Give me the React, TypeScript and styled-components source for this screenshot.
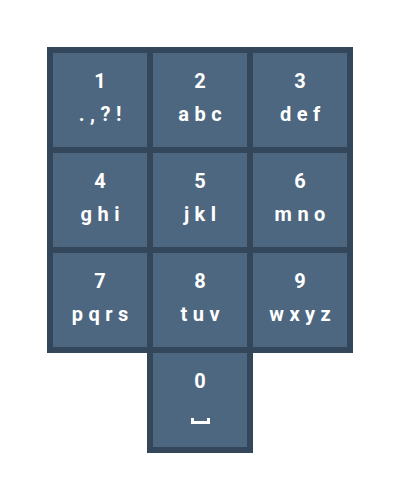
import React from "react";
import styled, { createGlobalStyle } from "styled-components";

const Global = createGlobalStyle`
  html, body { margin: 0; padding: 0; background: #ffffff; }
  body { font-family: Roboto, "Liberation Sans", sans-serif; }
`;

const Page = styled.div`
  width: 400px;
  height: 500px;
  display: flex;
  align-items: center;
  justify-content: center;
`;

const Pad = styled.div`
  display: flex;
  flex-direction: column;
  align-items: center;
`;

const Grid = styled.div`
  display: grid;
  grid-template-columns: repeat(3, 94px);
  grid-auto-rows: 94px;
  gap: 6px;
  padding: 6px;
  background: #34475a;
`;

const ZeroFrame = styled.div`
  padding: 0 6px 6px 6px;
  background: #34475a;
`;

const Key = styled.div`
  width: 94px;
  height: 94px;
  box-sizing: border-box;
  background: #4e6780;
  color: #ffffff;
  display: flex;
  flex-direction: column;
  align-items: center;
  padding-top: 12px;
  font-weight: 700;
  font-size: 20px;
  line-height: 33px;
`;

const Digit = styled.div``;

const Letters = styled.div`
  letter-spacing: 5.5px;
  padding-left: 5.5px;
`;

const SpaceGlyph = styled.div`
  width: 19px;
  height: 6px;
  box-sizing: border-box;
  border: 3px solid #ffffff;
  border-top: none;
  margin-top: 20px;
`;

const keys: [string, string][] = [
  ["1", ".,?!"],
  ["2", "abc"],
  ["3", "def"],
  ["4", "ghi"],
  ["5", "jkl"],
  ["6", "mno"],
  ["7", "pqrs"],
  ["8", "tuv"],
  ["9", "wxyz"],
];

export default function App() {
  return (
    <>
      <Global />
      <Page>
        <Pad>
          <Grid>
            {keys.map(([d, l]) => (
              <Key key={d}>
                <Digit>{d}</Digit>
                <Letters>{l}</Letters>
              </Key>
            ))}
          </Grid>
          <ZeroFrame>
            <Key>
              <Digit>0</Digit>
              <SpaceGlyph aria-label="space" />
            </Key>
          </ZeroFrame>
        </Pad>
      </Page>
    </>
  );
}
